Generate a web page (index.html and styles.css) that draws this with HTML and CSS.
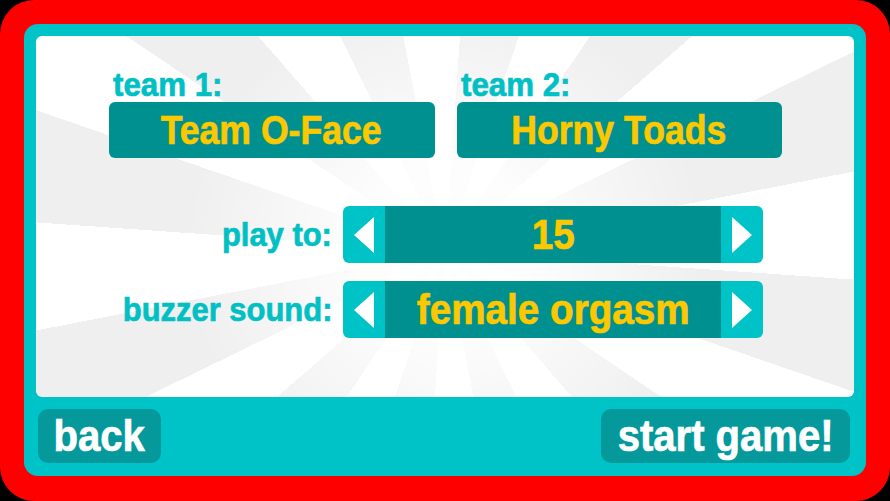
FILE: index.html
```html
<!DOCTYPE html>
<html>
<head>
<meta charset="utf-8">
<link rel="stylesheet" href="styles.css">
</head>
<body>
<div class="frame">
  <div class="screen">
    <div class="panel">
      <div class="teams">
        <div class="team">
          <div class="label"><span class="txt">team 1:</span></div>
          <div class="name-box"><span class="txt">Team O-Face</span></div>
        </div>
        <div class="team">
          <div class="label"><span class="txt">team 2:</span></div>
          <div class="name-box"><span class="txt">Horny Toads</span></div>
        </div>
      </div>
      <div class="settings">
        <div class="row-label"><span class="txt">play to:</span></div>
        <div class="stepper">
          <div class="arrow"><svg width="20" height="36" viewBox="0 0 20 36"><polygon points="20,0 0,18 20,36" fill="#fff"/></svg></div>
          <div class="value"><span class="txt">15</span></div>
          <div class="arrow"><svg width="20" height="36" viewBox="0 0 20 36"><polygon points="0,0 20,18 0,36" fill="#fff"/></svg></div>
        </div>
        <div class="row-label"><span class="txt">buzzer sound:</span></div>
        <div class="stepper">
          <div class="arrow"><svg width="20" height="36" viewBox="0 0 20 36"><polygon points="20,0 0,18 20,36" fill="#fff"/></svg></div>
          <div class="value"><span class="txt">female orgasm</span></div>
          <div class="arrow"><svg width="20" height="36" viewBox="0 0 20 36"><polygon points="0,0 20,18 0,36" fill="#fff"/></svg></div>
        </div>
      </div>
    </div>
    <div class="footer">
      <div class="btn back"><span class="txt">back</span></div>
      <div class="btn start"><span class="txt">start game!</span></div>
    </div>
  </div>
</div>
</body>
</html>
```

FILE: styles.css
```css
html, body {
  margin: 0;
  padding: 0;
}
body {
  background: #000;
  width: 890px;
  height: 501px;
  overflow: hidden;
  font-family: "Liberation Sans", Arial, sans-serif;
  font-weight: bold;
}
.txt {
  display: inline-block;
  white-space: nowrap;
  transform: scaleX(0.91);
  -webkit-text-stroke: 0.7px currentColor;
}
.frame {
  box-sizing: border-box;
  width: 890px;
  height: 501px;
  background: #ff0000;
  border-radius: 34px;
  padding: 24px 24px 25px 24px;
}
.screen {
  box-sizing: border-box;
  height: 100%;
  background: #00c3c7;
  border-radius: 14px;
  padding: 12px;
  display: flex;
  flex-direction: column;
}
.panel {
  height: 361px;
  border-radius: 6px;
  background:
    radial-gradient(circle at 409px 215px, rgba(255,255,255,1) 0px, rgba(255,255,255,0.85) 90px, rgba(255,255,255,0) 260px),
    repeating-conic-gradient(from 4deg at 409px 215px, #efefef 0deg 15deg, #ffffff 15deg 30deg);
  display: flex;
  flex-direction: column;
}
.teams {
  margin-top: 30px;
  display: grid;
  grid-template-columns: 326px 325px;
  column-gap: 22px;
  justify-content: center;
}
.label {
  height: 36px;
  line-height: 36px;
  font-size: 34px;
  color: #00c0c4;
  padding-left: 4px;
}
.label .txt {
  transform-origin: left center;
  transform: scaleX(0.92);
}
.name-box {
  height: 56px;
  line-height: 56px;
  border-radius: 6px;
  background: #00908f;
  color: #fcc800;
  font-size: 40px;
  text-align: center;
}
.name-box .txt {
  transform: scaleX(0.89);
}
.settings {
  margin-top: 48px;
  display: grid;
  grid-template-columns: 1fr 420px;
  column-gap: 11px;
  row-gap: 18px;
  padding-right: 91px;
  align-items: center;
}
.row-label {
  text-align: right;
  font-size: 34px;
  color: #00c0c4;
}
.row-label .txt {
  transform-origin: right center;
}
.stepper {
  height: 57px;
  display: flex;
  border-radius: 6px;
  overflow: hidden;
  background: #00c3c7;
}
.arrow {
  width: 42px;
  display: flex;
  align-items: center;
  justify-content: center;
}
.value {
  flex: 1;
  background: #00908f;
  color: #fcc800;
  font-size: 42px;
  line-height: 57px;
  text-align: center;
}
.value .txt {
  transform: scaleX(0.92);
}
.footer {
  display: flex;
  justify-content: space-between;
  padding: 12px 4px 0 2px;
}
.btn {
  height: 54px;
  line-height: 54px;
  border-radius: 10px;
  background: #06999c;
  color: #fff;
  font-size: 44px;
  text-align: center;
}
.back {
  width: 123px;
}
.start {
  width: 249px;
}
```
